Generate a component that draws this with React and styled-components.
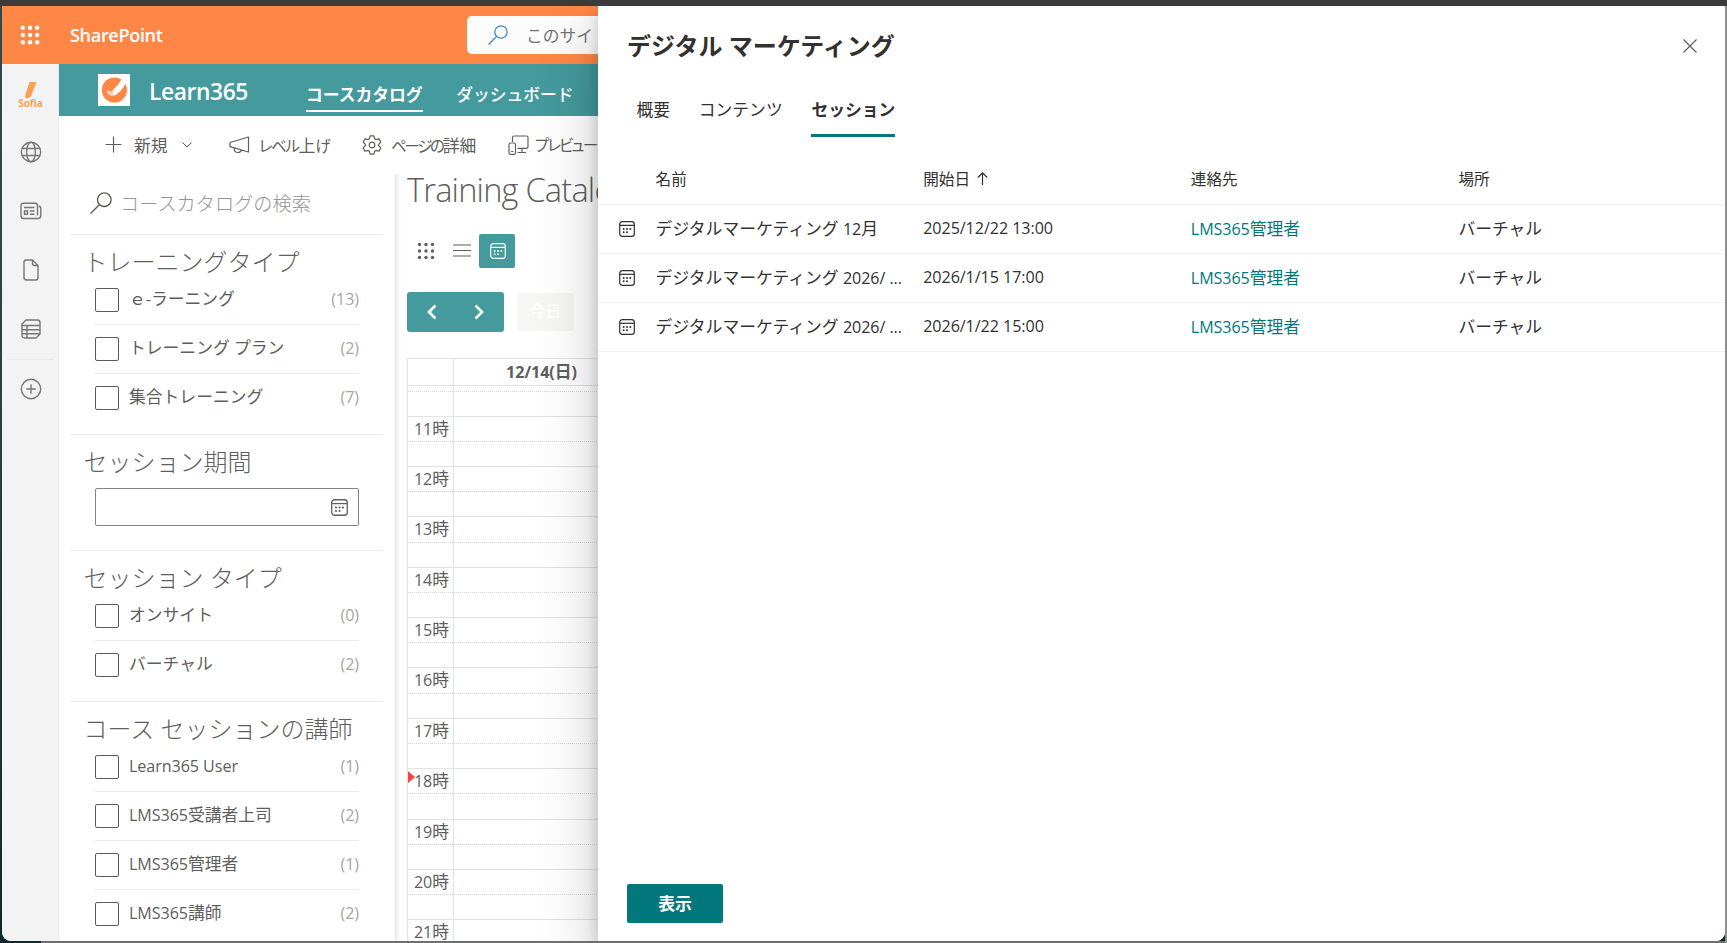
import React from "react";
import styled, { createGlobalStyle, css } from "styled-components";

const Global = createGlobalStyle`
  * { box-sizing: border-box; }
  html, body { margin: 0; padding: 0; overflow: hidden; }
  body {
    font-family: "Open Sans", "Noto Sans CJK JP", sans-serif;
    font-size: 16.8px;
    color: #605e5c;
  }
  svg { display: block; flex: none; }
`;

const TEAL = "#449a9d";
const DEEP_TEAL = "#03787c";

/* ---------- text ---------- */

const Latin = styled.span`
  font-size: 0.96em;
  letter-spacing: -0.004em;
`;

const Kana = styled.span`
  font-size: 0.92em;
  font-feature-settings: "palt";
  letter-spacing: ${(p) => p.$tracking}px;
`;

const Mixed = ({ children }) =>
  String(children)
    .split(/([\x21-\x7e]+(?: [\x21-\x7e]+)*)/)
    .filter(Boolean)
    .map((run, i) => (/^[\x21-\x7e]/.test(run) ? <Latin key={i}>{run}</Latin> : run));

/* ---------- window frame ---------- */

const Desktop = styled.div`
  width: 1727px;
  height: 943px;
  padding: 6px 2px 2px 2px;
  background:
    linear-gradient(#3b3b3b, #3b3b3b) 0 0 / 100% 6px no-repeat,
    linear-gradient(#8e8e8e, #8e8e8e) 100% 0 / 2px 100% no-repeat,
    linear-gradient(#6f6f6f, #6f6f6f) 41px 100% / 100% 2px no-repeat,
    linear-gradient(#33494f, #233c42 60%, #10282c);
`;

const Window = styled.div`
  position: relative;
  display: flex;
  flex-direction: column;
  width: 1723px;
  height: 935px;
  overflow: hidden;
  background: #fff;
  border-radius: 0 0 9px 9px;
`;

/* ---------- suite bar ---------- */

const SuiteBar = styled.header`
  display: flex;
  align-items: center;
  flex: none;
  height: 58px;
  padding-left: 18px;
  background: #ff8745;
  color: #fff;
`;

const Brand = styled.div`
  width: 427px;
  padding-left: 30px;
  font-size: 18.2px;
  font-weight: 600;
  letter-spacing: -0.4px;
`;

const SiteSearch = styled.div`
  display: flex;
  align-items: center;
  gap: 18px;
  width: 560px;
  height: 38px;
  padding-left: 21px;
  border-radius: 5px;
  background: #fcfcfc;
  color: #767676;
`;

const Below = styled.div`
  display: flex;
  flex: 1;
  min-height: 0;
`;

/* ---------- left rail ---------- */

const Rail = styled.nav`
  display: flex;
  flex-direction: column;
  align-items: center;
  flex: none;
  width: 57px;
  padding: 18px 0 0 1px;
  background: #f3f3f3;
  border-right: 1px solid #ececec;
  color: #767676;
`;

const SofiaMark = styled.div`
  display: flex;
  flex-direction: column;
  align-items: center;
  height: 28px;
  color: #fba050;
  font: 700 10px/9px "Open Sans", sans-serif;
`;

const RailSlot = styled.div`
  display: flex;
  align-items: center;
  justify-content: center;
  width: 47px;
  height: 59px;
  border-top: ${(p) => (p.$ruled ? "1px solid #e9e9e9" : "none")};
`;

const RailItems = styled.div`
  padding-top: 12.5px;
`;

/* ---------- site header and command bar ---------- */

const Site = styled.div`
  display: flex;
  flex-direction: column;
  flex: 1;
  min-width: 0;
`;

const SiteHeader = styled.div`
  display: flex;
  flex: none;
  height: 52px;
  padding-left: 39px;
  background: ${TEAL};
  color: #fff;
`;

const SiteLogo = styled.div`
  width: 32px;
  height: 32px;
  margin-top: 10px;
  background: #fff;
`;

const SiteName = styled.div`
  width: 176px;
  padding-left: 19px;
  font-size: 22.8px;
  font-weight: 600;
  line-height: 55px;
  letter-spacing: -0.4px;
`;

const SiteLink = styled.a`
  height: 48px;
  margin-right: 33.5px;
  line-height: 61px;
  font-weight: ${(p) => (p.$current ? 700 : 500)};
  border-bottom: 2px solid ${(p) => (p.$current ? "#fff" : "transparent")};
  white-space: nowrap;
`;

const CommandBar = styled.div`
  display: flex;
  flex: none;
  height: 58px;
  padding: 0 0 1px 46px;
`;

const Command = styled.div`
  display: flex;
  align-items: center;
  flex: none;
  width: ${(p) => p.$width}px;
  gap: ${(p) => p.$gap}px;
  white-space: nowrap;
`;

const Chevron = styled.span`
  margin-left: 2px;
`;

/* ---------- filters ---------- */

const Work = styled.div`
  display: flex;
  flex: 1;
  min-height: 0;
`;

const Filters = styled.aside`
  flex: none;
  width: 336px;
  padding: 0 12px;
`;

const CatalogSearch = styled.div`
  display: flex;
  align-items: center;
  gap: 8px;
  height: 60px;
  padding: 0 0 2px 19px;
  font-size: 19.2px;
  font-weight: 300;
`;

const Placeholder = styled.span`
  color: #979593;
`;

const Section = styled.section`
  height: ${(p) => p.$height}px;
  border-top: 1px solid #ebebeb;
`;

const SectionTitle = styled.h2`
  height: 53px;
  margin: 0;
  padding-left: 12.5px;
  font-size: 24px;
  font-weight: 300;
  line-height: 53px;
  white-space: nowrap;
`;

const Option = styled.label`
  display: flex;
  align-items: flex-start;
  width: 264px;
  height: 49px;
  margin-left: 24px;
`;

const OptionRule = styled.div`
  width: 264px;
  height: 1px;
  margin: -13px 0 12px 24px;
  background: #ebebeb;
`;

const Box = styled.span`
  width: 24px;
  height: 24px;
  border: 1px solid #5d5b59;
  border-radius: 2px;
`;

const OptionText = styled.span`
  flex: 1;
  padding-left: 10px;
  line-height: 21px;
`;

const Count = styled.span`
  line-height: 21px;
  letter-spacing: -0.3px;
  color: #a8a6a4;
`;

const DateField = styled.div`
  display: flex;
  align-items: center;
  justify-content: flex-end;
  width: 264px;
  height: 38px;
  margin-left: 24px;
  padding-right: 10px;
  border: 1px solid #858381;
  border-radius: 2px;
`;

/* ---------- calendar ---------- */

const Catalog = styled.main`
  flex: 1;
  min-width: 0;
  padding-left: 12px;
  overflow: hidden;
  background: linear-gradient(90deg, #e4e4e4, #f7f7f7 3px, #fff 6px);
`;

const CatalogTitle = styled.h1`
  height: 60px;
  margin: 0;
  font-size: 32.6px;
  font-weight: 300;
  line-height: 31px;
  letter-spacing: -0.8px;
  white-space: nowrap;
`;

const ViewSwitch = styled.div`
  display: flex;
  height: 34px;
`;

const ViewButton = styled.button`
  display: flex;
  align-items: center;
  justify-content: center;
  width: 36px;
  height: 34px;
  padding: 0 0 1px 1px;
  border: 0;
  border-radius: 2px;
  background: ${(p) => (p.$active ? TEAL : "transparent")};
  color: ${(p) => (p.$active ? "#fff" : "#605e5c")};
`;

const DateNav = styled.div`
  display: flex;
  align-items: center;
  gap: 13px;
  height: 40px;
  margin: 24px 0 26px;
`;

const Arrows = styled.div`
  display: flex;
  align-items: center;
  justify-content: space-between;
  width: 97px;
  height: 40px;
  padding: 0 20px;
  border-radius: 3px;
  background: ${TEAL};
  color: #fff;
`;

const Today = styled.div`
  width: 57px;
  height: 38px;
  border-radius: 3px;
  background: #f6f6f4;
  color: #fff;
  font-size: 16px;
  font-weight: 500;
  line-height: 36px;
  text-align: center;
`;

const line = "1px solid #e2e2e2";

const Grid = styled.div`
  width: 1400px;
  border-top: ${line};
  border-left: ${line};
`;

const DayHeader = styled.div`
  display: flex;
  height: 27px;
  border-bottom: ${line};
  font-weight: 700;
  line-height: 25px;
`;

const Gutter = styled.div`
  width: 46px;
  height: 100%;
  border-right: ${line};
`;

const DayName = styled.div`
  width: 175px;
  text-align: center;
`;

const HourRows = styled.div`
  display: flex;
`;

const Labels = styled.div`
  width: 46px;
  border-right: ${line};
`;

const Slots = styled.div`
  flex: 1;
`;

const HalfHour = styled.div`
  height: ${(p) => p.$height || 25.2}px;
  border-bottom: 1px ${(p) => (p.$mid ? "dotted #d6d6d6" : "solid #e2e2e2")};
`;

const LabelSlot = styled(HalfHour)`
  position: relative;
  padding-right: 4px;
  text-align: right;
  line-height: 23px;
  white-space: nowrap;
`;

const NowMarker = styled.i`
  position: absolute;
  left: 0;
  top: 2px;
  border-left: 7px solid #ff4040;
  border-top: 6px solid transparent;
  border-bottom: 6px solid transparent;
`;

/* ---------- session panel ---------- */

const Panel = styled.section`
  position: absolute;
  top: 0;
  right: 0;
  bottom: 0;
  display: flex;
  flex-direction: column;
  width: 1127px;
  background: #fff;
  color: #323130;
  box-shadow: 0 25.6px 57.6px rgba(0, 0, 0, 0.22), 0 4.8px 14.4px rgba(0, 0, 0, 0.18);
`;

const PanelHead = styled.div`
  display: flex;
  align-items: center;
  justify-content: space-between;
  height: 79px;
  padding: 0 28px 0 29px;
`;

const PanelTitle = styled.h2`
  margin: 0;
  padding-bottom: 2px;
  font-size: 24px;
  font-weight: 700;
`;

const CloseButton = styled.button`
  padding: 0;
  border: 0;
  background: none;
  color: #605e5c;
`;

const Tabs = styled.div`
  display: flex;
  gap: 28.8px;
  height: 52px;
  padding-left: 38.4px;
`;

const Tab = styled.div`
  height: 52px;
  line-height: 50px;
  font-weight: ${(p) => (p.$current ? 700 : 400)};
  border-bottom: 3px solid ${(p) => (p.$current ? DEEP_TEAL : "transparent")};
`;

const rowGrid = css`
  display: grid;
  grid-template-columns: 57.6px 267.6px 267.6px 267.6px 1fr;
  align-items: center;
  border-bottom: 1px solid #f1f1f1;
`;

const HeadRow = styled.div`
  ${rowGrid}
  height: 68px;
  padding-top: 16px;
  font-size: 15.6px;
`;

const HeadCell = styled.div`
  display: flex;
  align-items: center;
  gap: 7.5px;
`;

const SessionRow = styled.div`
  ${rowGrid}
  height: 49px;
`;

const Cell = styled.div`
  padding-bottom: 3px;
  color: ${(p) => (p.$link ? DEEP_TEAL : "inherit")};
  white-space: nowrap;
`;

const IconCell = styled.div`
  padding: 0 0 1px 20.5px;
`;

const PanelFoot = styled.div`
  margin-top: auto;
  padding: 0 29px 18px;
`;

const ShowButton = styled.button`
  width: 96px;
  height: 39px;
  padding: 0 0 2px;
  border: 0;
  border-radius: 2px;
  background: ${DEEP_TEAL};
  color: #fff;
  font: inherit;
  font-weight: 700;
`;

/* ---------- icons ---------- */

const Dots = ({ size, step, r }) => (
  <svg width={size} height={size} fill="currentColor">
    {[-1, 0, 1].map((a) =>
      [-1, 0, 1].map((b) => (
        <circle key={`${a}${b}`} cx={size / 2 + a * step} cy={size / 2 + b * step} r={r} />
      ))
    )}
  </svg>
);

const Stroke = ({ w, h, sw = 1.2, color = "currentColor", children, ...rest }) => (
  <svg width={w} height={h} viewBox={`0 0 ${w} ${h}`} fill="none" stroke={color} strokeWidth={sw} {...rest}>
    {children}
  </svg>
);

const SearchIcon = ({ size, color = "currentColor" }) => (
  <svg width={size} height={size} viewBox="0 0 22 22" fill="none" stroke={color} strokeWidth="1.4">
    <circle cx="14.3" cy="7.7" r="6.8" />
    <path d="M9.5 12.5 0.6 21.4" />
  </svg>
);

const CalendarIcon = ({ size = 16 }) => (
  <svg width={size} height={size} viewBox="0 0 16 16" fill="none" stroke="currentColor" strokeWidth="1.2">
    <rect x="0.7" y="0.7" width="14.6" height="14.6" rx="2.6" />
    <path d="M0.7 4.3h14.6" />
    <g fill="currentColor" stroke="none">
      <circle cx="4.7" cy="8" r="1" />
      <circle cx="8" cy="8" r="1" />
      <circle cx="11.3" cy="8" r="1" />
      <circle cx="4.7" cy="11.3" r="1" />
      <circle cx="8" cy="11.3" r="1" />
    </g>
  </svg>
);

const GearIcon = () => {
  const pts = [];
  for (let i = 0; i < 6; i++) {
    const a = (i * Math.PI) / 3 - Math.PI / 2;
    [[-0.42, 6.7], [-0.2, 9.3], [0.2, 9.3], [0.42, 6.7]].forEach(([d, r]) =>
      pts.push(`${(10 + r * Math.cos(a + d)).toFixed(2)},${(10 + r * Math.sin(a + d)).toFixed(2)}`)
    );
  }
  return (
    <Stroke w={20} h={20} strokeLinejoin="round">
      <polygon points={pts.join(" ")} />
      <circle cx="10" cy="10" r="2.8" />
    </Stroke>
  );
};

const LogoIcon = () => (
  <svg width="32" height="32" viewBox="0 0 32 32">
    <circle cx="16.4" cy="16" r="12.6" fill="#ff8745" />
    <path d="M10.500 19.500C15 16.500 20 11.500 24 4.500L29.800 4C27.500 12 22 18.800 16.500 21.500Q13 22 10.500 19.500z" fill="#fff" />
    <path d="M8.300 15.800 13 17.600 17 15.500 14 21.900Q9 21.500 8.300 15.800z" fill="#ffd3b8" />
  </svg>
);

/* ---------- data ---------- */

const trainingTypes = [
  ["ｅ-ラーニング", 13],
  ["トレーニング プラン", 2],
  ["集合トレーニング", 7],
];
const sessionTypes = [
  ["オンサイト", 0],
  ["バーチャル", 2],
];
const instructors = [
  ["Learn365 User", 1],
  ["LMS365受講者上司", 2],
  ["LMS365管理者", 1],
  ["LMS365講師", 2],
];
const hours = [11, 12, 13, 14, 15, 16, 17, 18, 19, 20, 21];
const sessions = [
  ["デジタルマーケティング 12月", "2025/12/22 13:00"],
  ["デジタルマーケティング 2026/ ...", "2026/1/15 17:00"],
  ["デジタルマーケティング 2026/ ...", "2026/1/22 15:00"],
];

const CheckList = ({ items }) =>
  items.map(([label, count], i) => (
    <React.Fragment key={label}>
      {i > 0 && <OptionRule />}
      <Option>
        <Box />
        <OptionText><Mixed>{label}</Mixed></OptionText>
        <Count><Mixed>{`(${count})`}</Mixed></Count>
      </Option>
    </React.Fragment>
  ));

const HourColumn = ({ slot: Slot, labelled }) => (
  <>
    <Slot $mid $height={6} />
    <Slot $height={24.6} />
    {hours.map((h) => (
      <React.Fragment key={h}>
        <Slot $mid>
          {labelled && h === 18 && <NowMarker />}
          {labelled && <Mixed>{`${h}時`}</Mixed>}
        </Slot>
        <Slot />
      </React.Fragment>
    ))}
  </>
);

export default function App() {
  return (
    <Desktop>
      <Global />
      <Window>
        <SuiteBar>
          <Dots size={20} step={7.2} r={2.2} />
          <Brand>SharePoint</Brand>
          <SiteSearch>
            <SearchIcon size={20} color="#3b86c8" />
            このサイトを検索
          </SiteSearch>
        </SuiteBar>

        <Below>
          <Rail>
            <SofiaMark>
              <svg width="13" height="17"><path d="M5.500 0h7L7.500 13q-1 3-4 3.500Q0.500 17 1.500 12z" fill="currentColor" /></svg>
              Sofia
            </SofiaMark>
            <RailItems>
              <RailSlot>
                <Stroke w={22} h={22} sw={1.4}>
                  <circle cx="11" cy="11" r="9.700" />
                  <ellipse cx="11" cy="11" rx="4.400" ry="9.700" />
                  <path d="M2.200 7.500h17.600M2.200 14.500h17.600" />
                </Stroke>
              </RailSlot>
              <RailSlot>
                <Stroke w={22} h={18} sw={1.4}>
                  <path d="M17.500 13.500V3.500q0-2.300-2.300-2.300H3.500Q1 1.200 1 3.700v10Q1 16.500 3.800 16.500h14q3 0 3-3V6.500q0-2-2-2.200" />
                  <path d="M4 5.500h10.500M10 9h4.500M10 12.300h4.500M4.500 9h3v3.300h-3z" />
                </Stroke>
              </RailSlot>
              <RailSlot>
                <Stroke w={16} h={22} sw={1.4}>
                  <path d="M9.500 1H3.300Q1 1 1 3.300v15.200Q1 21 3.300 21h9.400Q15 21 15 18.500V6.500zM9.500 1v3.500q0 2 2 2H15" />
                </Stroke>
              </RailSlot>
              <RailSlot>
                <Stroke w={20} h={20} sw={1.4}>
                  <path d="M5 1h11.500Q19 1 19 3.500V15l-4 4H3.500Q1 19 1 16.500V5zM1 6.500h18M1 10.700h18M1 14.800h18M6 6.500V19" />
                </Stroke>
              </RailSlot>
              <RailSlot $ruled>
                <Stroke w={22} h={22} sw={1.4}>
                  <circle cx="11" cy="11" r="9.700" />
                  <path d="M11 6.200v9.600M6.200 11h9.600" />
                </Stroke>
              </RailSlot>
            </RailItems>
          </Rail>

          <Site>
            <SiteHeader>
              <SiteLogo><LogoIcon /></SiteLogo>
              <SiteName>Learn365</SiteName>
              <SiteLink $current>コースカタログ</SiteLink>
              <SiteLink>ダッシュボード</SiteLink>
            </SiteHeader>

            <CommandBar>
              <Command $width={124} $gap={12}>
                <Stroke w={17} h={17}><path d="M8.500 0.500v16M0.500 8.500h16" /></Stroke>
                新規
                <Chevron><Stroke w={10} h={6} sw={1}><path d="M0.500 0.500 5 5l4.500-4.500" /></Stroke></Chevron>
              </Command>
              <Command $width={133} $gap={9}>
                <Stroke w={21} h={18} strokeLinejoin="round">
                  <path d="M19.500 1 1 6.500v4.200L19.500 16zM5 12q0 4.500 4 4.500 2.500 0 3.500-2.500" />
                </Stroke>
                <span>
                  <Kana $tracking={-1.4}>レベル</Kana>上<Kana $tracking={-1}>げ</Kana>
                </span>
              </Command>
              <Command $width={146} $gap={9}>
                <GearIcon />
                <span>
                  <Kana $tracking={-2.2}>ページの</Kana>詳細
                </span>
              </Command>
              <Command $width={120} $gap={6}>
                <Stroke w={21} h={20}>
                  <path d="M4.500 7V2.500Q4.500 1 6 1h12.500Q20 1 20 2.500v9.300q0 1.500-1.500 1.500H9.500M14 13.300V17.500M9.500 17.500h8.500" />
                  <rect x="1" y="8" width="6.500" height="11.300" rx="1.500" />
                  <path d="M3 16.500h2.500" />
                </Stroke>
                <Kana $tracking={-1.8}>プレビュー</Kana>
              </Command>
            </CommandBar>

            <Work>
              <Filters>
                <CatalogSearch>
                  <SearchIcon size={22} />
                  <Placeholder>コースカタログの検索</Placeholder>
                </CatalogSearch>
                <Section $height={200}>
                  <SectionTitle>トレーニングタイプ</SectionTitle>
                  <CheckList items={trainingTypes} />
                </Section>
                <Section $height={116}>
                  <SectionTitle>セッション期間</SectionTitle>
                  <DateField><CalendarIcon size={17} /></DateField>
                </Section>
                <Section $height={151}>
                  <SectionTitle>セッション タイプ</SectionTitle>
                  <CheckList items={sessionTypes} />
                </Section>
                <Section $height={240}>
                  <SectionTitle>コース セッションの講師</SectionTitle>
                  <CheckList items={instructors} />
                </Section>
              </Filters>

              <Catalog>
                <CatalogTitle>Training Catalog</CatalogTitle>
                <ViewSwitch>
                  <ViewButton><Dots size={18} step={6.5} r={1.7} /></ViewButton>
                  <ViewButton><Stroke w={18} h={13}><path d="M0 1h18M0 6.500h18M0 12h18" /></Stroke></ViewButton>
                  <ViewButton $active><CalendarIcon size={16} /></ViewButton>
                </ViewSwitch>
                <DateNav>
                  <Arrows>
                    <Stroke w={10} h={16} sw={2.6}><path d="M8.500 1.500 2 8l6.500 6.500" /></Stroke>
                    <Stroke w={10} h={16} sw={2.6}><path d="M1.500 1.500 8 8l-6.500 6.500" /></Stroke>
                  </Arrows>
                  <Today>今日</Today>
                </DateNav>
                <Grid>
                  <DayHeader>
                    <Gutter />
                    <DayName><Mixed>12/14(日)</Mixed></DayName>
                  </DayHeader>
                  <HourRows>
                    <Labels><HourColumn slot={LabelSlot} labelled /></Labels>
                    <Slots><HourColumn slot={HalfHour} /></Slots>
                  </HourRows>
                </Grid>
              </Catalog>
            </Work>
          </Site>
        </Below>

        <Panel>
          <PanelHead>
            <PanelTitle>デジタル マーケティング</PanelTitle>
            <CloseButton>
              <Stroke w={14} h={14}><path d="M0.500 0.500l13 13M13.500 0.500l-13 13" /></Stroke>
            </CloseButton>
          </PanelHead>
          <Tabs>
            <Tab>概要</Tab>
            <Tab>コンテンツ</Tab>
            <Tab $current>セッション</Tab>
          </Tabs>
          <HeadRow>
            <span />
            <HeadCell>名前</HeadCell>
            <HeadCell>
              開始日
              <Stroke w={11} h={13}><path d="M5.500 0.800V13M0.800 5.500 5.500 0.800l4.700 4.700" /></Stroke>
            </HeadCell>
            <HeadCell>連絡先</HeadCell>
            <HeadCell>場所</HeadCell>
          </HeadRow>
          {sessions.map(([name, start]) => (
            <SessionRow key={start}>
              <IconCell><CalendarIcon size={16} /></IconCell>
              <Cell><Mixed>{name}</Mixed></Cell>
              <Cell><Mixed>{start}</Mixed></Cell>
              <Cell $link><Mixed>LMS365管理者</Mixed></Cell>
              <Cell>バーチャル</Cell>
            </SessionRow>
          ))}
          <PanelFoot><ShowButton>表示</ShowButton></PanelFoot>
        </Panel>
      </Window>
    </Desktop>
  );
}
